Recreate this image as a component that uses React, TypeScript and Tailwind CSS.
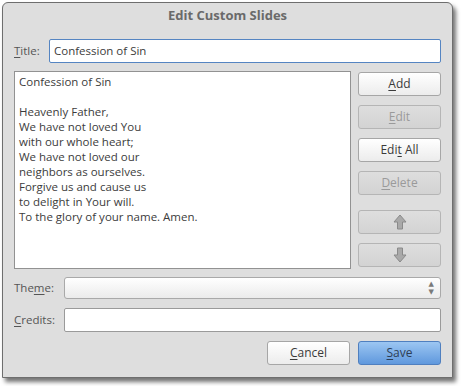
const font = { fontFamily: '"Open Sans", "DejaVu Sans", sans-serif' };

function U({ children }: { children: string }) {
    return <span className="underline underline-offset-2 decoration-1">{children}</span>;
}

function Btn({
    children,
    disabled,
    primary,
}: {
    children: React.ReactNode;
    disabled?: boolean;
    primary?: boolean;
}) {
    const base = 'h-[24px] w-[83px] flex items-center justify-center rounded-[3px] border text-[12px]';
    if (primary)
        return (
            <div className={`${base} border-[#4f7fbf] bg-gradient-to-b from-[#9cc6f2] to-[#5f98dd] text-[#2d3e55]`}>
                <span>{children}</span>
            </div>
        );
    if (disabled)
        return (
            <div className={`${base} border-[#b5b5b5] bg-gradient-to-b from-[#dedede] to-[#d3d3d3] text-[#9a9a9a]`}>
                <span className="flex">{children}</span>
            </div>
        );
    return (
        <div className={`${base} border-[#a6a6a6] bg-gradient-to-b from-[#ffffff] to-[#ececec] text-[#3a3a3a]`}>
            <span>{children}</span>
        </div>
    );
}

function Arrow({ down }: { down?: boolean }) {
    return (
        <svg width="14" height="16" viewBox="0 0 14 16" className={down ? 'rotate-180' : ''}>
            <path
                d="M7 1 L13 8 L9.5 8 L9.5 15 L4.5 15 L4.5 8 L1 8 Z"
                fill="#a9a9a9"
                stroke="#8a8a8a"
                strokeWidth="1"
                strokeLinejoin="round"
            />
        </svg>
    );
}

const lines = [
    'Confession of Sin',
    '',
    'Heavenly Father,',
    'We have not loved You',
    'with our whole heart;',
    'We have not loved our',
    'neighbors as ourselves.',
    'Forgive us and cause us',
    'to delight in Your will.',
    'To the glory of your name. Amen.',
];

export default function App() {
    return (
        <div className="w-[462px] h-[386px] bg-white pt-[2px] pl-[2px]" style={font}>
            <div className="w-[451px] h-[376px] flex flex-col bg-[#dedede] border border-[#6e6e6e] rounded-t-[6px] shadow-[3px_4px_4px_rgba(0,0,0,0.55)] px-[11px] text-[11.5px] text-[#4a4a4a]">
                <div className="h-[26px] flex items-center justify-center font-bold text-[13px] text-[#6a6a6a]">
                    Edit Custom Slides
                </div>

                <div className="mt-[10px] h-[24px] flex items-center">
                    <div className="w-[35px] text-[#555]">
                        <U>T</U>itle:
                    </div>
                    <div className="flex-1 h-full flex items-center bg-white border border-[#5585c2] rounded-[2px] pl-[4px] text-[#3c3c3c]">
                        Confession of Sin
                    </div>
                </div>

                <div className="mt-[8px] h-[198px] flex gap-[7px]">
                    <div className="flex-1 bg-white border border-[#929292] pt-[2px] pl-[4px] leading-[15px] text-[#3c3c3c]">
                        {lines.map((l, i) => (
                            <div key={i} className="h-[15px]">
                                {l}
                            </div>
                        ))}
                    </div>
                    <div className="w-[83px] flex flex-col pt-[1px]">
                        <Btn>
                            <U>A</U>dd
                        </Btn>
                        <div className="mt-[9px]">
                            <Btn disabled>
                                <U>E</U>dit
                            </Btn>
                        </div>
                        <div className="mt-[9px]">
                            <Btn>
                                Edi<U>t</U> All
                            </Btn>
                        </div>
                        <div className="mt-[9px]">
                            <Btn disabled>
                                <U>D</U>elete
                            </Btn>
                        </div>
                        <div className="mt-[15px]">
                            <Btn disabled>
                                <Arrow />
                            </Btn>
                        </div>
                        <div className="mt-[9px]">
                            <Btn disabled>
                                <Arrow down />
                            </Btn>
                        </div>
                    </div>
                </div>

                <div className="mt-[8px] h-[22px] flex items-center">
                    <div className="w-[50px] text-[#555]">
                        The<U>m</U>e:
                    </div>
                    <div className="flex-1 h-full flex items-center justify-end pr-[6px] rounded-[3px] border border-[#a9a9a9] bg-gradient-to-b from-[#ffffff] to-[#ebebeb]">
                        <div className="flex flex-col items-center text-[7px] leading-[8px] text-[#7a7a7a]">
                            <span>▲</span>
                            <span>▼</span>
                        </div>
                    </div>
                </div>

                <div className="mt-[9px] h-[24px] flex items-center">
                    <div className="w-[50px] text-[#555]">
                        <U>C</U>redits:
                    </div>
                    <div className="flex-1 h-full bg-white border border-[#9a9a9a] rounded-[2px]" />
                </div>

                <div className="mt-[9px] flex justify-end gap-[8px]">
                    <Btn>
                        <U>C</U>ancel
                    </Btn>
                    <Btn primary>
                        <U>S</U>ave
                    </Btn>
                </div>
            </div>
        </div>
    );
}
